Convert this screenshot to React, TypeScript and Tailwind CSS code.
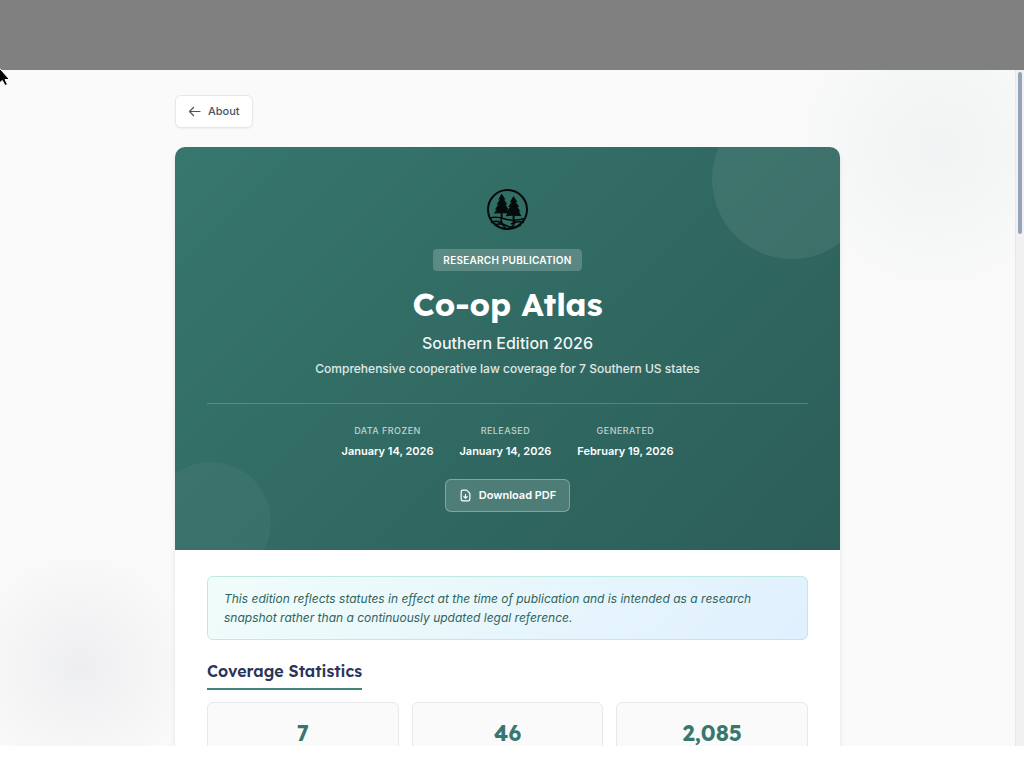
interface MetaItem {
  label: string;
  value: string;
}

const meta: MetaItem[] = [
  { label: "Data Frozen", value: "January 14, 2026" },
  { label: "Released", value: "January 14, 2026" },
  { label: "Generated", value: "February 19, 2026" },
];

const stats = ["7", "46", "2,085"];

function ForestLogo() {
  return (
    <svg className="w-[42px] h-[42px]" viewBox="0 0 42 42" fill="none" stroke="#050b0a" aria-hidden="true">
      <circle cx="20.500" cy="20.500" r="19.500" strokeWidth="2" />
      <g fill="#050b0a" stroke="none">
        <path d="M14.600 4.500l3.900 6-1.500-.1 3.400 5.200-1.900-.1 3.200 5.400-1.600-.1 2.100 3.800-6.600-.4V30h-2v-5.800L7 24.600l2.600-4.100-1.700.1 3.400-5.200-1.700.1 3.200-5-1.400.1z" />
        <path d="M26.500 7l3.800 6-1.500-.1 3.400 5.100-1.800-.1 3 4.700-1.500-.1 2.600 4.700-6.900-.5V34h-2v-7.300l-7 .5 2.800-4.600-1.600.1 3.100-4.800-1.700.1 3.200-5-1.400.1z" />
      </g>
      <g strokeWidth="1.600">
        <path d="M2 29.500c5-2 10-1.500 15 .2s11 3 22-.7" />
        <path d="M4 33.500c4-1.800 7-1.500 11 .2M37 33.500c-5-1.600-9-.5-13 1.500" />
        <path d="M7.500 36.500c4-2.500 8-2 12.500.5s9 1.500 14-1" />
        <path d="M14 30c.5 4 2 7.500 6 10.300M28 32c-.5 3.500-3 6.500-7 8.300" />
      </g>
    </svg>
  );
}

function CoverHeader() {
  return (
    <header className="relative overflow-hidden rounded-t-[10px] bg-linear-135 from-[#37776d] via-[#316a63] to-[#2c5d59] px-8 pt-[42px] pb-[38px] flex flex-col items-center text-center text-white">
      {/* Decorative circles */}
      <div className="absolute -top-12 -right-8 size-40 rounded-full bg-white/7" />
      <div className="absolute -bottom-8 -left-6 size-[120px] rounded-full bg-white/4" />

      <ForestLogo />

      <span className="mt-[18px] h-[22px] px-2.5 flex items-center rounded-[4px] bg-white/20 text-[10px] font-semibold tracking-wide uppercase">
        Research Publication
      </span>

      <h1 className="mt-3 font-[Lexend,Inter,sans-serif] text-[32px] leading-[42px] font-bold">
        Co-op Atlas
      </h1>
      <p className="mt-1.5 text-[16px] leading-6 font-medium text-white/95">Southern Edition 2026</p>
      <p className="mt-1 text-[12px] leading-5 font-medium text-white/85">
        Comprehensive cooperative law coverage for 7 Southern US states
      </p>

      <dl className="mt-6 w-full border-t border-white/20 pt-5 flex justify-center gap-[26px]">
        {meta.map((item) => (
          <div key={item.label}>
            <dt className="text-[9px] leading-[14px] font-medium tracking-wider uppercase text-white/70">
              {item.label}
            </dt>
            <dd className="mt-[3px] text-[11px] leading-5 font-semibold">{item.value}</dd>
          </div>
        ))}
      </dl>

      <button
        type="button"
        className="mt-[18px] h-[33px] px-[13px] flex items-center gap-[7px] rounded-md border border-white/30 bg-white/15 text-[11px] font-semibold"
      >
        <svg className="size-[13px]" viewBox="0 0 24 24" fill="none" stroke="currentColor" strokeWidth="2.200" strokeLinecap="round" strokeLinejoin="round" aria-hidden="true">
          <path d="M12 10v7m0 0l-3-3M12 17l3-3M17 22H7a3 3 0 01-3-3V5a3 3 0 013-3h7l6 6v11a3 3 0 01-3 3z" />
        </svg>
        Download PDF
      </button>
    </header>
  );
}

export default function App() {
  return (
    <div className="h-screen flex flex-col bg-white font-[Inter,sans-serif]">
      <div className="h-[70px] shrink-0 bg-[#808080]" />

      <div className="relative flex-1 min-h-0 flex bg-[#fafafa]">
        {/* Pointer */}
        <svg className="absolute -top-[3px] left-0 z-20 w-3 h-5" viewBox="0 0 12 20" aria-hidden="true">
          <path d="M-6-5L9.500 12.500H5L7.500 17.500 5 18.500 2.300 13.500-6 21z" fill="#000" stroke="#fff" strokeWidth="1" />
        </svg>

        <main className="relative flex-1 min-w-0 overflow-hidden">
          {/* Background glows */}
          <div className="absolute -top-[82px] -right-[82px] size-80 rounded-full bg-radial from-[#37776d]/5 to-transparent to-70%" />
          <div className="absolute -bottom-[40px] -left-[40px] size-60 rounded-full bg-radial from-[#2a3558]/6 to-transparent to-70%" />

          <div className="relative mx-auto max-w-[665px] pt-[25px]">
            <a
              href="#about"
              className="flex w-fit h-[33px] items-center gap-[7px] rounded-md border border-[#e5e7eb] bg-white px-3 text-[11px] font-medium text-[#475569] shadow-xs"
            >
              <svg className="size-[13px]" viewBox="0 0 13 13" fill="none" stroke="currentColor" strokeWidth="1.200" strokeLinecap="round" strokeLinejoin="round" aria-hidden="true">
                <path d="M5.500 2.500l-4 4 4 4M1.500 6.500h10.500" />
              </svg>
              About
            </a>

            <article className="mt-[19px] rounded-[10px] bg-white shadow-md">
              <CoverHeader />

              <div className="px-8 pt-[26px] pb-8">
                <p className="rounded-md border border-[#c0e9e2] bg-linear-135 from-[#f0fdfa] to-[#e0f0fe] px-4 py-3 text-[12px] leading-[19px] italic text-[#2f635e]">
                  This edition reflects statutes in effect at the time of publication and is intended as a research
                  snapshot rather than a continuously updated legal reference.
                </p>

                <h2 className="mt-[19px] w-fit border-b-2 border-[#418579] pb-[5px] font-[Lexend,Inter,sans-serif] text-[16px] leading-6 font-semibold text-[#2a3558]">
                  Coverage Statistics
                </h2>

                <div className="mt-3 grid grid-cols-3 gap-[13px]">
                  {stats.map((stat) => (
                    <div
                      key={stat}
                      className="rounded-md border border-[#e8e8ea] bg-[#fafafa] pt-4 pb-10 text-center font-[Lexend,Inter,sans-serif] text-[22px] leading-7 font-bold text-[#37776d]"
                    >
                      {stat}
                    </div>
                  ))}
                </div>
              </div>
            </article>
          </div>
        </main>

        {/* Scrollbar */}
        <div className="w-[9px] shrink-0 border-l border-[#e8e8ea] bg-[#f1f1f3] pt-0.5">
          <div className="mx-auto h-[162px] w-1 rounded-full bg-[#94a3b8]" />
        </div>
      </div>

      <div className="h-[22px] shrink-0 bg-white" />
    </div>
  );
}
